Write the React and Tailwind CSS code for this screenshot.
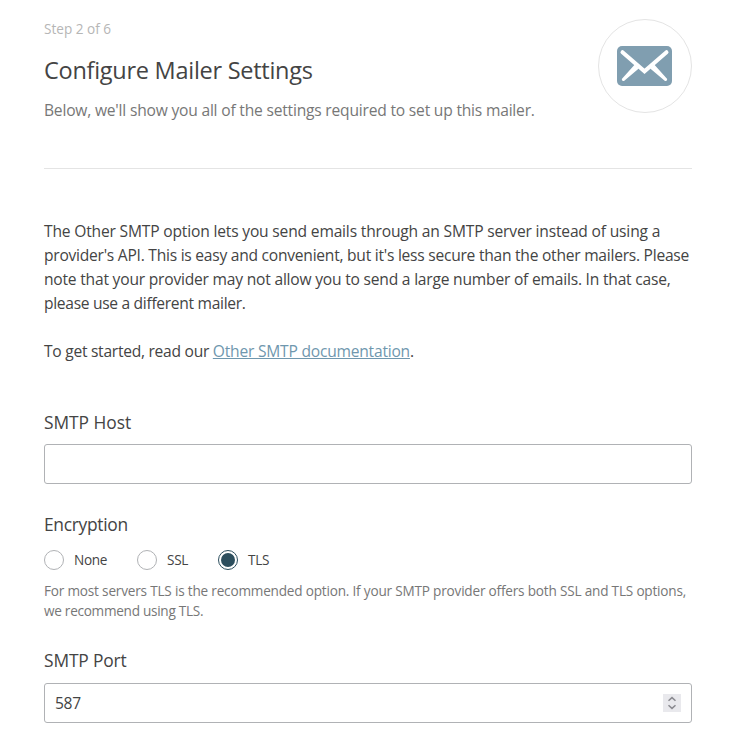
import { useState } from 'react'

const ENCRYPTION = [
  { id: 'none', label: 'None', width: 'w-[93px]' },
  { id: 'ssl', label: 'SSL', width: 'w-[81px]' },
  { id: 'tls', label: 'TLS', width: 'w-[60px]' },
]

function MailIcon() {
  return (
    <svg width="56" height="40" viewBox="0 0 56 40" fill="none">
      <rect x="0" y="0" width="55" height="40" rx="5" fill="#809eb0" />
      <path d="M5.5 6.2 L27.5 25.3 L49.5 6.2" stroke="#fff" strokeWidth="4" strokeLinecap="round" />
      <path d="M17.8 18.5 L4.8 33 Q4.6 35.4 7 35 L21.8 22.5 Z M37.2 18.5 L50.2 33 Q50.4 35.4 48 35 L33.2 22.5 Z" fill="#fff" />
    </svg>
  )
}

export default function App() {
  const [host, setHost] = useState('')
  const [port, setPort] = useState('587')
  const [encryption, setEncryption] = useState('tls')

  return (
    <div className="h-[751px] overflow-hidden bg-white pl-11 pr-[43px] font-['Open_Sans','Noto_Sans',sans-serif] text-[15.6px] text-[#444]">

      {/* Header */}
      <header className="flex h-[169px] justify-between border-b border-[#e4e4e4] pt-[19px]">
        <div className="whitespace-nowrap">
          <p className="text-[13.6px] leading-5 text-[#b6b6b6]">Step 2 of 6</p>
          <h1 className="mt-[15px] text-[23.5px] leading-8 tracking-[-0.27px]">Configure Mailer Settings</h1>
          <p className="mt-3 leading-6 tracking-[-0.2px] text-[#777]">Below, we'll show you all of the settings required to set up this mailer.</p>
        </div>
        <div className="flex h-[94px] w-[94px] shrink-0 items-center justify-center rounded-full border border-[#e4e4e4]">
          <MailIcon />
        </div>
      </header>

      {/* Description */}
      <div className="whitespace-nowrap pt-[50px] leading-6">
        <p>
          <span className="tracking-[-0.18px]">The Other SMTP option lets you send emails through an SMTP server instead of using a</span><br />
          <span className="tracking-[-0.25px]">provider's API. This is easy and convenient, but it's less secure than the other mailers. Please</span><br />
          <span className="tracking-[-0.21px]">note that your provider may not allow you to send a large number of emails. In that case,</span><br />
          <span className="tracking-[-0.31px]">please use a different mailer.</span>
        </p>
        <p className="mt-6 tracking-[-0.27px]">
          To get started, read our <a href="#docs" className="tracking-[-0.22px] text-[#6f97ae] underline">Other SMTP documentation</a>.
        </p>
      </div>

      {/* SMTP Host */}
      <div className="mt-[47px]">
        <label htmlFor="host" className="block text-[17.4px] leading-6 tracking-[-0.05px]">SMTP Host</label>
        <input
          id="host"
          type="text"
          value={host}
          onChange={e => setHost(e.target.value)}
          className="mt-[10px] block h-10 w-full rounded-[3px] border border-[#b0b2b5] px-[10px] outline-none"
        />
      </div>

      {/* Encryption */}
      <div className="mt-7">
        <p className="text-[17.4px] leading-6 tracking-[-0.3px]">Encryption</p>
        <div className="mt-[14px] flex">
          {ENCRYPTION.map(opt => (
            <label key={opt.id} className={`flex h-5 items-center gap-[10px] text-[13.6px] tracking-[-0.3px] ${opt.width}`}>
              <input
                type="radio"
                name="encryption"
                className="sr-only"
                checked={encryption === opt.id}
                onChange={() => setEncryption(opt.id)}
              />
              <span className={`flex h-5 w-5 shrink-0 items-center justify-center rounded-full border ${encryption === opt.id ? 'border-[#2d4f5e]' : 'border-[#b0b2b5]'}`}>
                {encryption === opt.id && <span className="h-[14px] w-[14px] rounded-full bg-[#2d4f5e]" />}
              </span>
              {opt.label}
            </label>
          ))}
        </div>
        <p className="mt-[11px] whitespace-nowrap text-[13.6px] leading-5 text-[#777]">
          <span className="tracking-[-0.2px]">For most servers TLS is the recommended option. If your SMTP provider offers both SSL and TLS options,</span><br />
          <span className="tracking-[-0.28px]">we recommend using TLS.</span>
        </p>
      </div>

      {/* SMTP Port */}
      <div className="mt-[27px]">
        <label htmlFor="port" className="block text-[17.4px] leading-6 tracking-[-0.15px]">SMTP Port</label>
        <div className="mt-[11px] flex h-10 items-center rounded-[3px] border border-[#b0b2b5] px-[10px]">
          <input
            id="port"
            type="text"
            value={port}
            onChange={e => setPort(e.target.value)}
            className="min-w-0 flex-1 pt-0.5 tracking-[-0.3px] outline-none"
          />
          <span className="flex h-[18px] w-[18px] items-center justify-center bg-[#e9e9ed]">
            <svg width="10" height="14" viewBox="0 0 10 14" fill="none" stroke="#8a8a90" strokeWidth="1.5">
              <path d="M1.5 4.8 L5 1.6 L8.5 4.8 M1.5 9.2 L5 12.4 L8.5 9.2" />
            </svg>
          </span>
        </div>
      </div>
    </div>
  )
}
